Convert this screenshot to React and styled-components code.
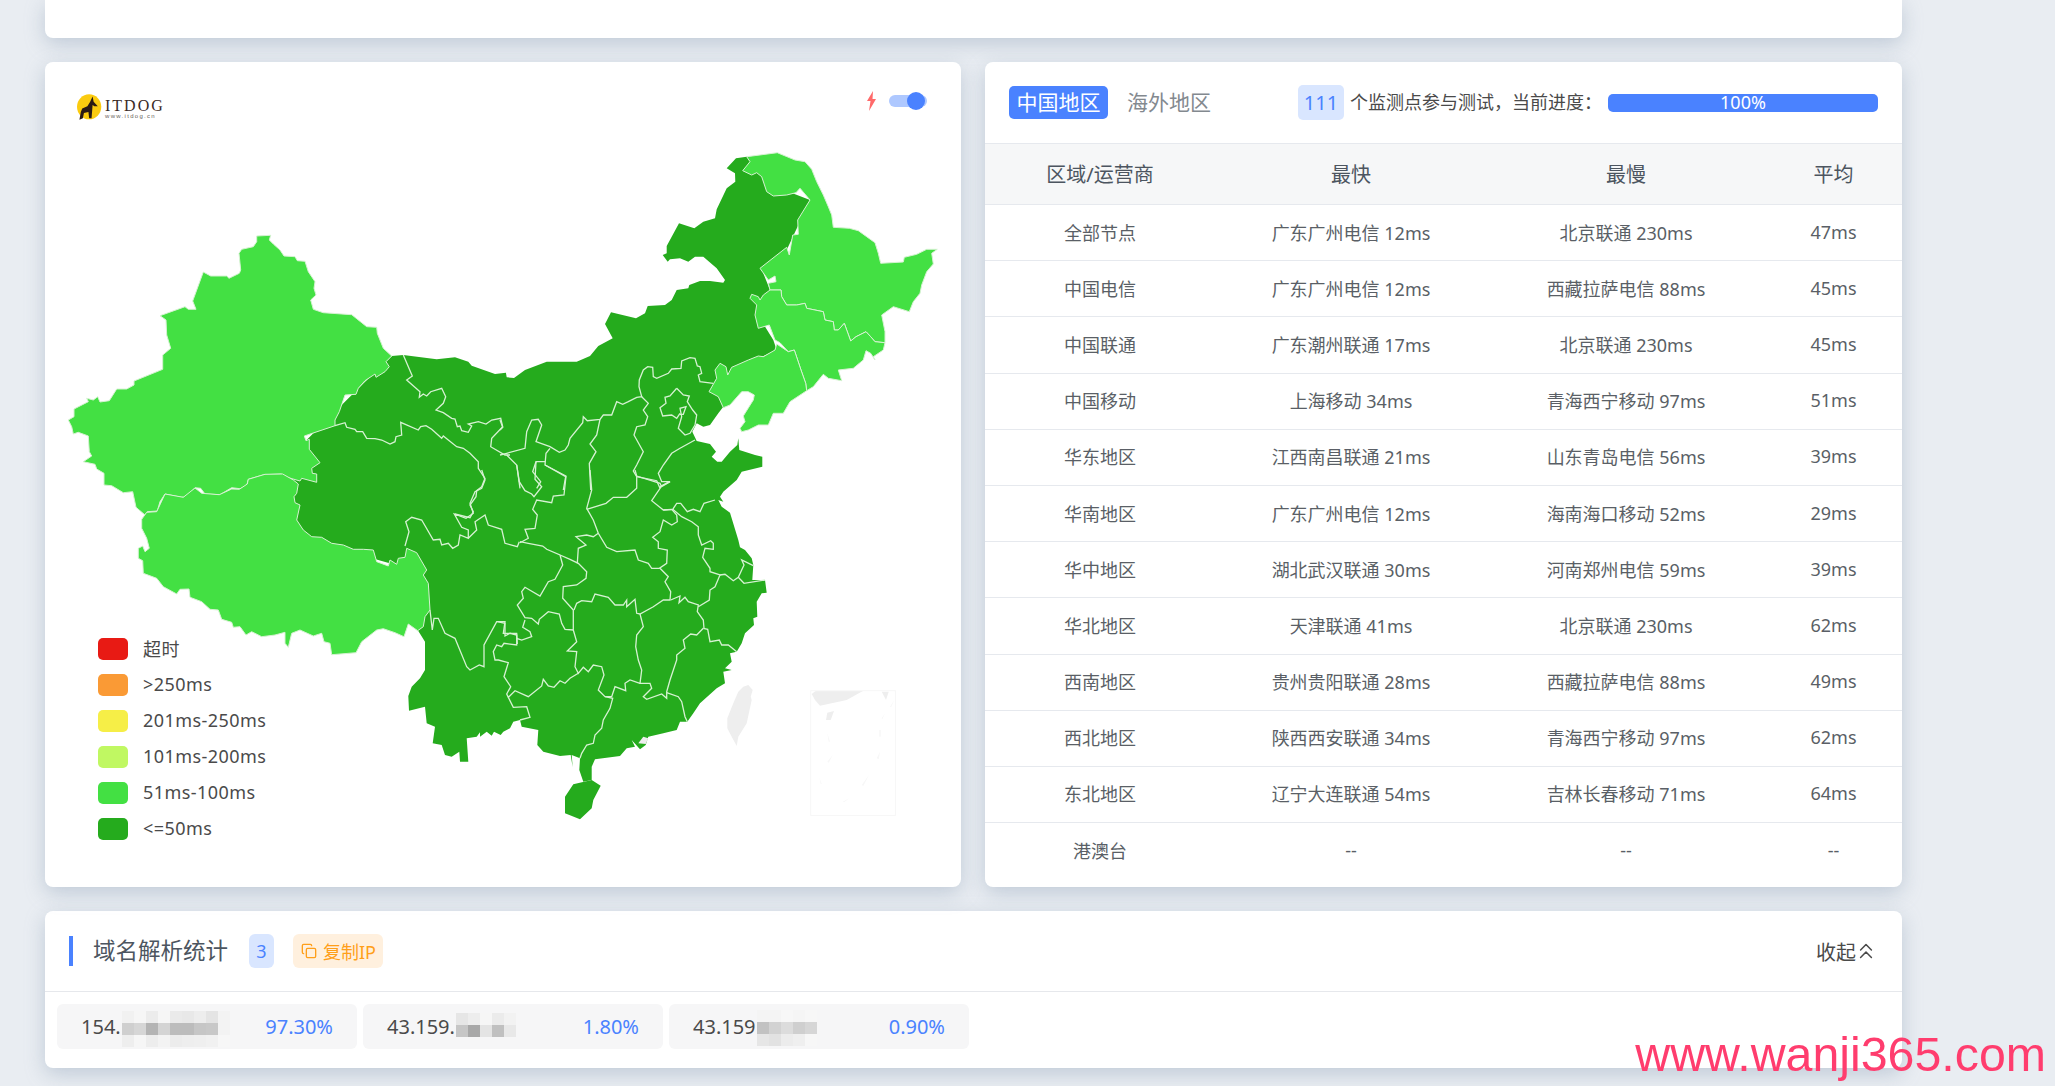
import React from "react";
import styled, { createGlobalStyle } from "styled-components";
import { ChevronsUp, Copy } from "lucide-react";

const GlobalStyle = createGlobalStyle`
  html, body {
    margin: 0;
    background: #e9edf2;
    overflow: hidden;
  }
  * {
    box-sizing: border-box;
  }
  body {
    font-family: "Noto Sans", "Noto Sans CJK SC", sans-serif;
    font-weight: 400;
  }
`;

//map outlines are traced from crops, "at" turns crop pixels into page pixels
const at = (ox, oy, s) =>
  s
    .trim()
    .split(/\s+/)
    .map((p) => {
      const [x, y] = p.split(",").map(Number);
      return `${(ox + x / 3).toFixed(1)},${(oy + y / 3).toFixed(1)}`;
    })
    .join(" ");
const A = (s) => at(60, 220, s);
const B = (s) => at(500, 140, s);
const C = (s) => at(120, 470, s);
const D = (s) => at(480, 470, s);

const darkLand = [
  A("995,408 1030,405 1130,418 1185,412 1225,425 1235,437 1305,462 1338,458"),
  B(`18,700 20,712 42,714 75,690 140,665 230,665 270,648 295,618 338,595 315,552 333,517 408,535 435,520 443,498
     495,495 515,480 530,450 565,445 568,435 600,423 630,423 670,428 675,420 650,385 610,350 585,350 565,365 540,355
     510,358 503,365 488,345 500,340 500,318 537,250 583,265 610,245 645,235 650,208 680,145 706,125 705,100 680,85
     708,55 740,50 800,130 930,180 860,330 790,400 810,450 770,520 820,600 830,630 700,690 660,740 670,800
     655,820 630,855 610,860 590,850 577,875 590,903 630,912 648,935 635,950 652,965 665,965 690,935 712,915 715,895
     718,930 765,945 787,950 787,980 725,995`),
  D(`770,30 730,65 720,80 730,95 715,90 725,110 750,128 775,210 780,232 795,240 815,265 820,285 817,330 855,330
     860,368 845,370 830,395 832,440 820,445 822,465 795,490 785,520 770,545 750,550 755,575 735,595 755,600 730,605
     735,640 710,655 660,700 640,730 622,755 600,755 590,780 550,790 505,800 497,825 480,838 455,810 465,830 440,835
     420,858 345,868 335,890 335,930 310,935 298,900 300,865 275,855 278,892 272,855 240,858 190,845 172,825 175,780
     125,770 120,750 100,755 90,775 70,785 62,795 42,785 35,797 20,785 0,800`),
  C(`1080,787 1070,800 1040,805 1045,875 1020,875 1018,845 995,860 975,855 965,825 938,820 945,770 920,760 915,710
     867,722 865,678 875,650 900,625 915,600 915,515 893,480 915,440 880,300 530,200 450,100`),
  A("700,700 900,500"),
].join(" ");

const hainan = D("280,943 335,930 362,947 340,990 335,1015 300,1048 255,1030 255,980");

const lightLand = [
  //xinjiang
  A(`590,48 632,46 628,60 640,72 660,90 672,108 705,110 712,122 735,124 745,155 765,185 762,205 768,225 752,240 760,268
     790,278 875,284 920,320 950,322 952,340 970,385 995,408 978,425 988,440 975,455 948,472 945,462 915,482 895,505
     888,523 855,525 838,575 825,600 825,617 733,648 738,662 748,658 748,688 780,728 755,745 757,760 770,762 770,787
     725,775 720,783 668,768 665,762 612,764 565,778 560,797 540,806 515,803 480,824 435,822 422,805 405,803 380,830
     365,832 315,822 300,845 292,873 262,875 255,885 228,862 218,815 190,818 155,797 132,795 132,760 110,747 105,733
     70,725 95,708 88,695 85,648 55,637 40,642 35,620 25,600 42,590 42,567 85,545 80,535 100,540 113,530 120,546 148,542
     170,507 200,507 222,495 222,483 308,448 308,405 332,385 320,345 318,300 300,287 375,260 385,268 408,268 398,243
     430,156 452,168 500,168 507,175 538,160 542,150 537,100 545,88 580,80 590,65`),
  //tibet
  C(`80,127 110,125 135,72 190,82 225,54 245,70 298,74 335,57 358,58 382,42 385,28 435,13 488,12 520,30 535,42 530,70
     522,80 525,98 540,105 530,150 550,180 575,200 605,202 635,220 670,225 700,238 730,238 760,240 770,275 805,288
     810,270 830,283 835,265 855,262 860,235 890,248 920,300 910,315 925,340 930,420 915,440 910,470 893,482 865,462
     852,500 825,488 790,476 770,480 725,515 708,548 635,554 630,520 612,515 605,490 580,498 540,480 515,490 505,532
     495,520 495,487 465,495 425,500 395,485 378,495 360,470 340,472 335,457 305,448 295,420 270,418 245,395 210,382
     207,357 180,358 170,372 130,350 110,325 70,310 68,272 55,265 55,235 68,228 75,245 88,235 80,205 65,175 65,148`),
  //heilongjiang
  B(`740,50 832,38 885,60 915,65 935,88 950,125 970,165 985,200 995,225 1000,262 1048,265 1075,272 1125,308 1135,340
     1142,370 1210,366 1213,352 1250,343 1280,328 1312,328 1295,340 1300,372 1280,395 1265,435 1260,460 1240,485
     1228,515 1180,500 1145,525 1155,575 1155,608 1125,605 1112,590 1098,575 1068,590 1052,603 1033,550 1015,570
     1003,570 1000,545 975,540 970,515 945,510 920,505 915,490 890,495 860,495 845,470 843,450 810,450 805,430 828,425
     825,408 805,420 780,385 860,322 868,345 878,285 895,283 893,240 930,180 900,145 888,158 860,165 820,168 800,155
     785,110 770,98 755,105 728,92 750,65`),
  //jilin
  B(`810,450 843,450 845,470 860,495 890,495 915,490 920,505 945,510 970,515 975,540 1000,545 1003,570 1015,570 1033,550
     1052,603 1068,590 1098,575 1112,590 1125,605 1155,608 1150,630 1120,650 1125,660 1112,640 1098,632 1090,660
     1060,685 1015,690 1025,722 985,715 970,703 940,740 920,752 917,730 903,690 883,630 865,635 840,608 825,600 808,555
     775,565 765,525 770,495 750,475 755,463 775,470 780,480 790,465`),
  //liaoning
  B(`830,612 865,635 883,630 903,690 917,730 920,752 870,785 850,820 820,820 805,855 775,855 745,870 725,875 720,865
     735,845 730,828 760,780 763,765 745,755 725,755 690,795 670,803 655,770 627,755 650,715 645,690 660,670 678,680
     683,705 695,682 745,660 775,648 790,650 825,630`),
];

const borders = [
  A(`1030,405 1057,468 1040,480 1080,515 1078,532 1090,522 1100,528 1112,515 1145,505 1157,530 1150,550 1128,570 1150,578
     1175,595 1185,597 1192,620 1200,618 1205,632 1225,637 1235,618 1225,612 1255,605 1278,612 1295,600 1322,595 1328,620
     1295,655 1292,680 1335,705 1350,705`),
  A(`825,617 855,608 860,622 885,628 890,635 908,635 920,655 945,656 965,660 990,672 1005,665 1008,650 1025,645 1022,607
     1075,630 1082,620 1098,617 1115,628 1145,655 1150,648 1165,660 1190,680 1210,685 1230,700 1255,725 1255,745 1275,775
     1265,800 1250,812 1248,830 1230,855 1240,875 1230,893 1185,882`),
  C(`1085,0 1095,30 1085,55 1065,65 1050,100 1060,130 1038,145 1003,132 1025,172 1045,180 1045,205 1020,195 1015,225
     998,235 985,220 965,225 960,208 940,210 905,150 875,142 857,155 867,185 855,228`),
  C("1045,205 1070,180 1065,155 1095,135 1105,165 1145,178 1155,220 1192,230 1198,215"),
  D(`120,215 145,220 188,228 200,238 240,255 248,285 225,328 205,335 180,378 135,352 125,365 130,385 112,405 135,443
     155,445 175,462 178,448 205,425 238,432 245,460 255,478 280,480 280,420 248,385 250,350 290,345 318,325 320,305
     295,280 270,268 240,255`),
  D("110,-15 118,35 135,62 155,72 162,80 185,50 165,28 168,-25"),
  D(`195,-15 258,18 252,75 220,78 215,98 170,90 158,118 172,135 165,175 135,178 145,205 120,218`),
  D(`330,0 335,60 320,115 340,150 355,190 380,232 410,245 465,240 475,270 505,280 515,295 538,295 560,280 562,240 535,235
     535,215 518,202 540,185 550,150 575,165 592,155 590,135 575,118 550,120 515,92 545,48 570,35 545,50 540,40 470,18 465,0`),
  D("320,118 378,100 400,82 440,82 470,55 470,18"),
  D("355,190 340,200 320,195 288,200 318,225 295,235 292,280"),
  D(`282,420 290,400 305,392 335,395 345,372 385,382 405,405 430,405 440,390 440,410 465,388 470,430 480,432 520,410
     550,390 570,390 572,365 555,335 565,320 540,295`),
  D(`480,432 490,470 470,495 467,530 475,570 485,600 480,640 510,640 515,655 490,680 500,688 545,672 560,685 560,665
     570,630 590,570 590,555 615,535 610,510 632,492 650,495 670,475`),
  D("572,390 600,378 597,398 615,382 625,395 655,405 652,425 670,450 672,475"),
  D("550,120 578,118 590,100 602,100 622,125 640,118 660,125 672,100 705,90"),
  D(`578,118 605,140 635,155 655,170 655,195 665,225 692,212 700,220 700,238 675,235 668,262 690,295 690,305 720,315
     705,350 690,360 688,390 655,410`),
  D("720,315 735,313 760,332 775,322 792,285 785,270 820,287"),
  D("775,322 792,340 855,330"),
  D("670,475 683,478 690,515 718,510 725,525 745,525 770,545"),
  D(`280,480 290,515 262,543 290,545 285,590 295,610 310,592 325,605 340,585 365,590 372,615 355,660 375,680 395,680
     405,650 437,662 435,640 450,630 480,640`),
  D(`295,610 270,625 255,640 240,632 222,652 205,648 190,628 185,648 145,680 105,662 85,682 80,672 92,650 72,620 85,578
     55,570 45,570 40,545 50,525 65,530 72,520 110,525 110,495 90,490 75,498 75,460 52,455`),
  D("110,505 125,510 155,500 150,485 128,472 135,450"),
  D("85,682 100,712 140,710 150,742 120,750"),
  D("375,680 398,685 390,715 370,750 365,775 345,795 340,820 320,825 305,850 300,865"),
  D("560,668 595,680 605,695 615,740 622,755"),
  C(`930,420 937,480 942,445 955,445 975,490 1005,505 1040,590 1050,600 1078,585 1092,590 1092,525 1130,455 1155,455
     1150,490 1190,490 1192,522`),
  B(`640,730 600,725 595,705 605,700 600,680 592,678 585,655 570,653 545,663 543,685 515,687 505,700 470,715 460,710 458,682
     443,680 430,690 418,720 417,740 425,770 410,772 385,785 368,793 350,785 335,825 310,825 300,838 262,842 250,830 248,848
     210,895 205,915 195,930 178,937 150,920 108,905 125,855 115,838 95,840 80,875 75,925 20,940 0,945`),
  B("425,770 445,790 430,810 443,830 435,855 410,860 402,885 430,935 410,975 400,993 410,1010 470,1022 480,1045"),
  B("300,838 290,885 270,912 288,935 268,970 272,1050"),
  B("585,900 540,925 515,940 490,975 475,1000 485,1025 510,1025 480,1040"),
  B(`530,745 550,765 568,768 562,785 578,810 590,825 585,855 570,880 555,885 535,865 545,830 540,805 558,800 550,823 540,823`),
  B("530,745 510,768 495,772 498,790 480,803 488,828 515,825 530,835 540,820"),
  B("0,840 8,862 0,870"),
  B("135,965 108,965 98,995 122,1025 110,1045"),
  B("150,925 138,940 135,975 197,1010 190,1050"),
  B("20,945 50,975 60,1045"),
];

const greyLand = [
  D("790,650 805,645 818,660 812,680 815,690 800,760 775,800 770,828 755,800 742,775 742,745 760,700 775,665"),
  D("475,820 490,800 505,805 497,822"),
  D("995,672 1008,662 1150,662 1100,690 1020,707 1005,690"),
  D("1042,728 1062,723 1052,750 1038,750"),
  D("1205,665 1226,665 1218,690"),
];

const faintLand = [
  D("1198,780 1202,780 1202,800 1198,800"),
  D("1042,790 1050,815 1046,815"),
  D("1190,865 1200,845 1196,868"),
  D("1042,875 1058,855 1046,878"),
  D("1018,922 1025,942 1022,942"),
  D("1145,945 1167,915 1150,948"),
  D("1088,995 1108,985 1092,997"),
  D("1230,710 1243,690 1233,712"),
  D("1205,745 1215,730 1207,748"),
];

const legend = [
  { color: "#e81a14", label: "超时" },
  { color: "#fa9a35", label: ">250ms" },
  { color: "#f6ee47", label: "201ms-250ms" },
  { color: "#c0f862", label: "101ms-200ms" },
  { color: "#43e043", label: "51ms-100ms" },
  { color: "#25ab1d", label: "<=50ms" },
];

const rows = [
  ["全部节点", "广东广州电信 12ms", "北京联通 230ms", "47ms"],
  ["中国电信", "广东广州电信 12ms", "西藏拉萨电信 88ms", "45ms"],
  ["中国联通", "广东潮州联通 17ms", "北京联通 230ms", "45ms"],
  ["中国移动", "上海移动 34ms", "青海西宁移动 97ms", "51ms"],
  ["华东地区", "江西南昌联通 21ms", "山东青岛电信 56ms", "39ms"],
  ["华南地区", "广东广州电信 12ms", "海南海口移动 52ms", "29ms"],
  ["华中地区", "湖北武汉联通 30ms", "河南郑州电信 59ms", "39ms"],
  ["华北地区", "天津联通 41ms", "北京联通 230ms", "62ms"],
  ["西南地区", "贵州贵阳联通 28ms", "西藏拉萨电信 88ms", "49ms"],
  ["西北地区", "陕西西安联通 34ms", "青海西宁移动 97ms", "62ms"],
  ["东北地区", "辽宁大连联通 54ms", "吉林长春移动 71ms", "64ms"],
  ["港澳台", "--", "--", "--"],
];

const ips = [
  {
    ip: "154.",
    percent: "97.30%",
    cols: 9,
    shift: 4,
    cells: [
      "#f1f1f1", "#f6f6f6", "#ececec", "#f6f6f6", "#eaeaea", "#e8e8e8", "#ededed", "#e4e4e4", "#f3f3f3",
      "#cfcfcf", "#d6d6d6", "#b4b4b4", "#d4d4d4", "#bcbcbc", "#bcbcbc", "#c6c6c6", "#c8c8c8", "#f3f3f3",
      "#eeeeee", "#f6f6f6", "#ededed", "#f3f3f3", "#ececec", "#eeeeee", "#efefef", "#f1f1f1", "#f7f7f7",
    ],
  },
  {
    ip: "43.159.",
    percent: "1.80%",
    cols: 5,
    shift: -4,
    cells: [
      "#e6e6e6", "#ededed", "#f6f6f6", "#ebebeb", "#f2f2f2",
      "#c6c6c6", "#a8a8a8", "#e4e4e4", "#c0c0c0", "#e8e8e8",
    ],
  },
  {
    ip: "43.159",
    percent: "0.90%",
    cols: 5,
    shift: 2,
    cells: [
      "#f4f4f4", "#f4f4f4", "#f7f7f7", "#f5f5f5", "#f7f7f7",
      "#c2c2c2", "#d2d2d2", "#dcdcdc", "#cfcfcf", "#d6d6d6",
      "#e6e6e6", "#e2e2e2", "#ececec", "#efefef", "#f7f7f7",
    ],
  },
];

const App = () => {
  return (
    <Page>
      <GlobalStyle />
      <TopCard />
      <Columns>
        <MapCard>
          <MapCanvas viewBox="45 62 916 825">
            <polygon points={darkLand} fill="#25ab1d" />
            <polygon points={hainan} fill="#25ab1d" />
            {borders.map((points, i) => (
              <polyline key={i} points={points} fill="none" stroke="#d6f2d2" strokeWidth="1.3" />
            ))}
            {lightLand.map((points, i) => (
              <polygon key={i} points={points} fill="#43e043" stroke="#d6f2d2" strokeWidth="1" />
            ))}
            {greyLand.map((points, i) => (
              <polygon key={i} points={points} fill="#eeeeee" />
            ))}
            {faintLand.map((points, i) => (
              <polygon key={i} points={points} fill="#f7f7f7" />
            ))}
            <rect x="810.7" y="690.7" width="84.7" height="124.7" fill="none" stroke="#f7f7f7" />
          </MapCanvas>
          <Logo>
            <svg width="26" height="26" viewBox="55 73 75 75">
              <ellipse cx="90" cy="110" rx="35" ry="36" fill="#fbcb0f" />
              <polygon
                points="100,80 103,95 115,108 105,108 100,105 97,143 90,143 88,125 75,128 72,143 62,147 66,125 70,115 85,108 93,95"
                fill="#2a1a14"
              />
            </svg>
            <LogoText>
              <LogoName>ITDOG</LogoName>
              <LogoUrl>www.itdog.cn</LogoUrl>
            </LogoText>
          </Logo>
          <Switcher>
            <svg width="12" height="20" viewBox="0 0 12 20">
              <polygon points="7,0 1,10 4.5,10 3,20 10,8 6.5,8" fill="#ff6a6a" />
            </svg>
            <Track>
              <Knob />
            </Track>
          </Switcher>
          <Legend>
            {legend.map((item) => (
              <LegendRow key={item.label}>
                <Swatch $color={item.color} />
                <LegendLabel>{item.label}</LegendLabel>
              </LegendRow>
            ))}
          </Legend>
        </MapCard>

        <TableCard>
          <TableTools>
            <Tab $active>中国地区</Tab>
            <Tab>海外地区</Tab>
            <Progress>
              <CountBadge>111</CountBadge>
              <ProgressLabel>个监测点参与测试，当前进度：</ProgressLabel>
              <ProgressBar>100%</ProgressBar>
            </Progress>
          </TableTools>
          <HeadRow>
            <span>区域/运营商</span>
            <span>最快</span>
            <span>最慢</span>
            <span>平均</span>
          </HeadRow>
          {rows.map((row) => (
            <BodyRow key={row[0]}>
              {row.map((cell, i) => (
                <span key={i}>{cell}</span>
              ))}
            </BodyRow>
          ))}
        </TableCard>
      </Columns>

      <StatsCard>
        <StatsHead>
          <StatsTitle>域名解析统计</StatsTitle>
          <SmallBadge>3</SmallBadge>
          <CopyButton>
            <Copy size={16} strokeWidth={2} />
            复制IP
          </CopyButton>
          <Collapse>
            收起
            <ChevronsUp size={26} strokeWidth={1.4} />
          </Collapse>
        </StatsHead>
        <Chips>
          {ips.map((item) => (
            <Chip key={item.percent}>
              <IpText>{item.ip}</IpText>
              <Mosaic $cols={item.cols} $shift={item.shift}>
                {item.cells.map((shade, i) => (
                  <MosaicCell key={i} $shade={shade} />
                ))}
              </Mosaic>
              <Percent>{item.percent}</Percent>
            </Chip>
          ))}
        </Chips>
      </StatsCard>
      <Watermark>www.wanji365.com</Watermark>
    </Page>
  );
};

const Page = styled.div`
  position: relative;
  width: 2055px;
  height: 1086px;
  padding-left: 45px;
  overflow: hidden;
  display: flex;
  flex-direction: column;
  gap: 24px;
`;

const Card = styled.div`
  width: 1857px;
  background: #fff;
  border-radius: 8px;
  box-shadow: 0 6px 20px rgba(130, 150, 175, 0.4);
`;

const TopCard = styled(Card)`
  height: 38px;
  border-radius: 0 0 8px 8px;
`;

const Columns = styled.div`
  display: grid;
  grid-template-columns: 916px 917px;
  gap: 24px;
  height: 825px;
  width: 1857px;
`;

const MapCard = styled(Card)`
  width: auto;
  position: relative;
`;

const MapCanvas = styled.svg`
  display: block;
  width: 100%;
  height: 100%;
`;

const Logo = styled.div`
  position: absolute;
  left: 32px;
  top: 32px;
  display: flex;
  align-items: center;
  gap: 2px;
`;

const LogoText = styled.div`
  display: flex;
  flex-direction: column;
  margin-top: 5px;
  color: #3a2a26;
`;

const LogoName = styled.span`
  font-family: "Liberation Serif", serif;
  font-size: 16px;
  line-height: 14px;
  letter-spacing: 2px;
`;

const LogoUrl = styled.span`
  font-family: "Liberation Sans", sans-serif;
  font-size: 6px;
  line-height: 7px;
  letter-spacing: 1.3px;
  color: #6a5f5c;
`;

const Switcher = styled.div`
  position: absolute;
  left: 821px;
  top: 29px;
  display: flex;
  align-items: center;
  gap: 11px;
`;

const Track = styled.div`
  position: relative;
  width: 38px;
  height: 12px;
  border-radius: 6px;
  background: #aec8ff;
`;

const Knob = styled.div`
  position: absolute;
  right: 2px;
  top: -3px;
  width: 18px;
  height: 18px;
  border-radius: 50%;
  background: #4a82ff;
`;

const Legend = styled.div`
  position: absolute;
  left: 53px;
  top: 574px;
  display: flex;
  flex-direction: column;
  gap: 10px;
`;

const LegendRow = styled.div`
  display: flex;
  align-items: center;
  gap: 15px;
  height: 26px;
  font-size: 18px;
  color: #4a4a4a;
`;

const LegendLabel = styled.span`
  padding-bottom: 2px;
  letter-spacing: 0.45px;
`;

const Swatch = styled.i`
  width: 30px;
  height: 22px;
  border-radius: 5px;
  background: ${(p) => p.$color};
`;

const TableCard = styled(Card)`
  width: auto;
  overflow: hidden;
`;

const TableTools = styled.div`
  display: flex;
  align-items: center;
  height: 82px;
  padding: 0 24px;
  border-bottom: 1px solid #e6e9ee;
`;

const Tab = styled.button`
  flex: none;
  width: 99px;
  height: 33px;
  margin-right: 19px;
  padding: 0;
  border: 0;
  border-radius: 5px;
  background: ${(p) => (p.$active ? "#4a82ff" : "transparent")};
  color: ${(p) => (p.$active ? "#fff" : "#83898f")};
  font: inherit;
  font-size: 21px;
  line-height: 33px;
  text-align: ${(p) => (p.$active ? "center" : "left")};
`;

const Progress = styled.div`
  display: flex;
  align-items: center;
  flex: none;
  margin-left: 53px;
`;

const CountBadge = styled.span`
  width: 46px;
  height: 35px;
  border-radius: 5px;
  background: #d9e6ff;
  color: #4a82ff;
  font-size: 20px;
  line-height: 35px;
  text-align: center;
`;

const ProgressLabel = styled.span`
  width: 264px;
  padding: 0 0 3px 6px;
  font-size: 18px;
  color: #4a4a4a;
  white-space: nowrap;
`;

const ProgressBar = styled.div`
  width: 270px;
  height: 18px;
  border-radius: 5px;
  background: #4a82ff;
  color: #fff;
  font-size: 18px;
  line-height: 17px;
  text-align: center;
`;

const TableGrid = styled.div`
  display: grid;
  grid-template-columns: 230px 272px 278px 137px;
  align-items: center;
  justify-items: center;
  border-bottom: 1px solid #e6e9ee;
  padding-bottom: 2px;
`;

const HeadRow = styled(TableGrid)`
  height: 61px;
  background: #f6f7f8;
  color: #4c5560;
  font-size: 20px;
`;

const BodyRow = styled(TableGrid)`
  height: 56.2px;
  color: #5a5f66;
  font-size: 18px;
  &:last-child {
    border-bottom: 0;
  }
`;

const StatsCard = styled(Card)`
  height: 157px;
`;

const StatsHead = styled.div`
  display: flex;
  align-items: center;
  height: 81px;
  padding: 0 23px 0 24px;
  border-bottom: 1px solid #e6e8ec;
`;

const StatsTitle = styled.h2`
  margin: 0 21px 0 0;
  padding-left: 20px;
  border-left: 4px solid #4a82ff;
  height: 30px;
  font-size: 22.5px;
  font-weight: 400;
  line-height: 30px;
  color: #4c5560;
`;

const SmallBadge = styled.span`
  width: 25px;
  height: 34px;
  margin-right: 19px;
  border-radius: 6px;
  background: #d9e6ff;
  color: #4a82ff;
  font-size: 18px;
  line-height: 34px;
  text-align: center;
`;

const CopyButton = styled.span`
  display: flex;
  align-items: center;
  gap: 6px;
  width: 90px;
  height: 34px;
  padding-left: 8px;
  border-radius: 6px;
  background: #fff0de;
  color: #ff9f1a;
  font-size: 18px;
  white-space: nowrap;
`;

const Collapse = styled.span`
  display: flex;
  align-items: center;
  margin-left: auto;
  font-size: 20px;
  color: #4a4a4a;
  svg {
    margin-left: -3px;
  }
`;

const Chips = styled.div`
  display: flex;
  gap: 6px;
  padding: 12px;
`;

const Chip = styled.div`
  display: flex;
  align-items: center;
  width: 300px;
  height: 45px;
  padding: 0 24px;
  border-radius: 6px;
  background: #f6f6f7;
  font-size: 20px;
`;

const IpText = styled.span`
  color: #4a4a4a;
`;

const Mosaic = styled.div`
  display: grid;
  grid-template-columns: repeat(${(p) => p.$cols}, 12px);
  grid-auto-rows: 12px;
  margin: ${(p) => p.$shift}px 0 0 1px;
`;

const MosaicCell = styled.i`
  background: ${(p) => p.$shade};
`;

const Percent = styled.span`
  margin-left: auto;
  color: #4a82ff;
`;

const Watermark = styled.div`
  position: absolute;
  right: 9px;
  top: 1026px;
  font-family: "Liberation Sans", sans-serif;
  font-size: 48.3px;
  line-height: 56px;
  color: #ff3d6e;
`;

export default App;
